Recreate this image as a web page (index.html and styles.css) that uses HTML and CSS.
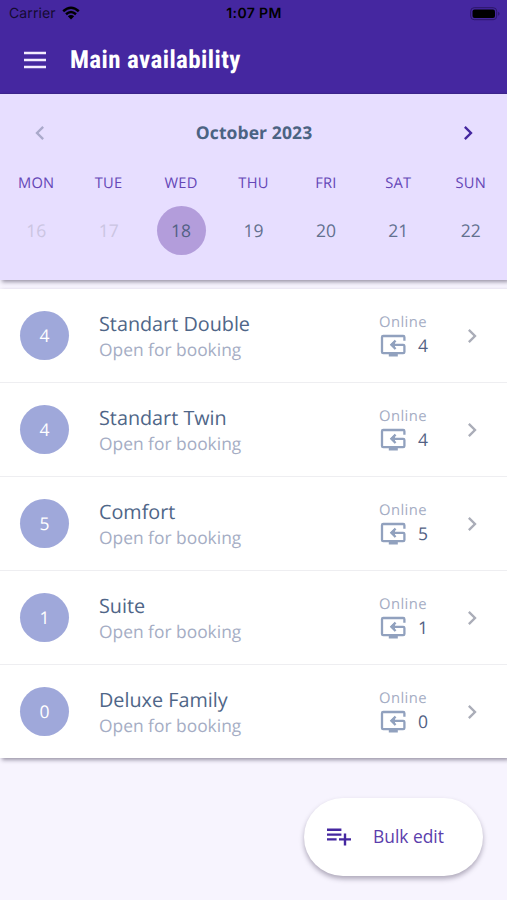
FILE: index.html
```html
<!DOCTYPE html>
<html lang="en">
<head>
<meta charset="utf-8">
<title>Main availability</title>
<link rel="stylesheet" href="styles.css">
</head>
<body>
<svg class="defs" width="0" height="0">
  <symbol id="right" viewBox="0 0 24 24"><path d="M10 6 8.59 7.41 13.17 12l-4.58 4.59L10 18l6-6z"/></symbol>
  <symbol id="left" viewBox="0 0 24 24"><path d="M15.41 7.41 14 6l-6 6 6 6 1.41-1.41L10.83 12z"/></symbol>
  <symbol id="online" viewBox="0 0 26 24"><path d="M24.4 6.8V3.2Q24.4 2 23.2 2H3.2Q2 2 2 3.2V18Q2 19.2 3.2 19.2H23.2Q24.4 19.2 24.4 18V12Q24.4 10.8 23.2 10.8H12M15.6 6.6l-4.2 4.2 4.2 4.2" fill="none" stroke="currentColor" stroke-width="2.3"/><path d="M10.2 10.8 15 6v9.6zM8.8 19h9v3.4h-9z"/></symbol>
</svg>
<header class="header">
  <div class="status">
    <div class="carrier">Carrier
      <svg class="wifi" viewBox="0 0 18 14"><path d="M1.2 5.2Q9-1.8 16.8 5.2M4 8.2Q9 3.9 14 8.2" fill="none" stroke="#000" stroke-width="2.5"/><path d="m9 13.5-3.2-3.3Q9 7.7 12.2 10.2z"/></svg>
    </div>
    <div class="time">1:07 PM</div>
    <svg class="battery" viewBox="0 0 30 14"><rect x=".7" y=".7" width="26" height="12" rx="3.5" fill="none" stroke="#2c1768" stroke-width="1"/><rect x="2.5" y="2.5" width="22.5" height="8.5" rx="2"/><path d="M28.2 4.8v4q1.3-.7 1.3-2t-1.3-2z" fill="#2c1768"/></svg>
  </div>
  <div class="bar">
    <svg class="menu" viewBox="0 0 24 18"><path d="M1 2h22M1 9h22M1 16h22" stroke="#f3ecff" stroke-width="2.3"/></svg>
    <h1 class="title">Main availability</h1>
  </div>
</header>
<section class="calendar">
  <div class="month">
    <svg class="chev prev"><use href="#left"/></svg>
    <h2 class="month-name">October 2023</h2>
    <svg class="chev next"><use href="#right"/></svg>
  </div>
  <div class="week names"><span>MON</span><span>TUE</span><span>WED</span><span>THU</span><span>FRI</span><span>SAT</span><span>SUN</span></div>
  <div class="week days"><span class="past">16</span><span class="past">17</span><span class="selected">18</span><span>19</span><span>20</span><span>21</span><span>22</span></div>
</section>
<main class="list">
  <div class="row"><span class="count">4</span><div class="info"><div class="name">Standart Double</div><div class="state">Open for booking</div></div><div class="channel"><div class="label">Online</div><div class="value"><svg class="tv"><use href="#online"/></svg>4</div></div><svg class="chev go"><use href="#right"/></svg></div>
  <div class="row"><span class="count">4</span><div class="info"><div class="name">Standart Twin</div><div class="state">Open for booking</div></div><div class="channel"><div class="label">Online</div><div class="value"><svg class="tv"><use href="#online"/></svg>4</div></div><svg class="chev go"><use href="#right"/></svg></div>
  <div class="row"><span class="count">5</span><div class="info"><div class="name">Comfort</div><div class="state">Open for booking</div></div><div class="channel"><div class="label">Online</div><div class="value"><svg class="tv"><use href="#online"/></svg>5</div></div><svg class="chev go"><use href="#right"/></svg></div>
  <div class="row"><span class="count">1</span><div class="info"><div class="name">Suite</div><div class="state">Open for booking</div></div><div class="channel"><div class="label">Online</div><div class="value"><svg class="tv"><use href="#online"/></svg>1</div></div><svg class="chev go"><use href="#right"/></svg></div>
  <div class="row"><span class="count">0</span><div class="info"><div class="name">Deluxe Family</div><div class="state">Open for booking</div></div><div class="channel"><div class="label">Online</div><div class="value"><svg class="tv"><use href="#online"/></svg>0</div></div><svg class="chev go"><use href="#right"/></svg></div>
</main>
<button class="bulk"><svg class="playlist" viewBox="2 6 20 14"><path d="M14 10H2v2h12v-2zm0-4H2v2h12V6zm4 8v-4h-2v4h-4v2h4v4h2v-4h4v-2h-4zM2 16h8v-2H2v2z"/></svg><span class="bulk-label">Bulk edit</span></button>
</body>
</html>
```
FILE: styles.css
```css
* { box-sizing: border-box; }
body { margin: 0; height: 900px; overflow: hidden; background: #f7f4fe; font-family: "Open Sans", sans-serif; color: #4f6688; display: flex; flex-direction: column; text-rendering: geometricPrecision; }
.defs { position: absolute; }
svg { display: block; flex: none; }
.header { height: 94px; flex: none; background: #4527a0; border-bottom: 1px solid #3e2590; }
.status { height: 27px; display: grid; grid-template-columns: 1fr auto 1fr; align-items: center; padding: 0 7px 0 8px; font-family: Inter, sans-serif; color: #000; }
.carrier { display: flex; align-items: center; gap: 6px; font-size: 14px; letter-spacing: .1px; color: #140b30; padding-left: 1px; }
.wifi { width: 18px; height: 14px; margin-bottom: 2px; }
.time { font-size: 14px; font-weight: 600; letter-spacing: .35px; }
.battery { width: 30px; height: 14px; justify-self: end; }
.bar { height: 66px; display: flex; align-items: center; padding-left: 23px; }
.menu { width: 24px; height: 18px; }
.title { margin: 0 0 0 23px; padding-top: 2px; color: #fff; font: 700 25px/32px "Roboto Condensed", Roboto, sans-serif; font-stretch: 75%; letter-spacing: .4px; white-space: nowrap; }
.calendar { height: 186px; flex: none; background: #e7deff; box-shadow: 2px 2px 4px rgba(40, 30, 60, .45); position: relative; }
.month { height: 78px; display: flex; align-items: center; justify-content: space-between; padding: 0 25px 0 26px; }
.chev { width: 28px; height: 28px; fill: currentColor; }
.prev { color: #aaa9cb; }
.next { color: #4527a0; }
.month-name { margin: 0; font-size: 17.5px; line-height: 24px; font-weight: 700; letter-spacing: .1px; color: #4c6383; }
.week { display: grid; grid-template-columns: repeat(7, 1fr); justify-items: center; align-items: center; }
.names { height: 22px; font-size: 14.7px; letter-spacing: .25px; color: #6547b7; }
.days { height: 73px; font-size: 17.5px; color: #63718f; }
.past { color: #cbc5e2; }
.selected { width: 49px; height: 49px; border-radius: 50%; background: #b39ddb; display: grid; place-items: center; color: #526184; }
.list { margin-top: 9px; background: #fff; box-shadow: 2px 2px 4px rgba(40, 30, 60, .45); }
.row { height: 94px; display: flex; align-items: center; padding: 0 20px; border-bottom: 1px solid #eeeef1; }
.row:last-child { height: 93px; border: 0; }
.count { width: 49px; height: 49px; border-radius: 50%; display: grid; place-items: center; background: #9fa8da; color: #fff; font-size: 17.5px; }
.info { margin-left: 30px; padding-top: 3px; width: 280px; }
.name { font-size: 19.8px; line-height: 26px; }
.state { font-size: 17.4px; line-height: 27px; color: #a5adc4; }
.channel { width: 60px; padding-bottom: 2px; }
.label { font-size: 14.8px; line-height: 23px; letter-spacing: .4px; color: #a5adc4; }
.value { display: flex; align-items: center; gap: 12px; height: 24px; font-size: 17.5px; color: #526184; }
.tv { width: 26px; height: 24px; margin-left: 1px; color: #91a1be; fill: currentColor; }
.go { color: #aaadb8; margin-left: 19px; }
.bulk { position: absolute; left: 304px; top: 798px; width: 179px; height: 78px; border: 0; border-radius: 39px; background: #fff; box-shadow: 0 3px 5px rgba(40, 30, 60, .35); display: flex; align-items: center; padding: 0 0 0 23px; gap: 22px; font: 17.4px "Open Sans", sans-serif; color: #5b3dac; }
.bulk-label { padding-bottom: 2px; }
.playlist { width: 24px; height: 18px; fill: #4527a0; }
```
